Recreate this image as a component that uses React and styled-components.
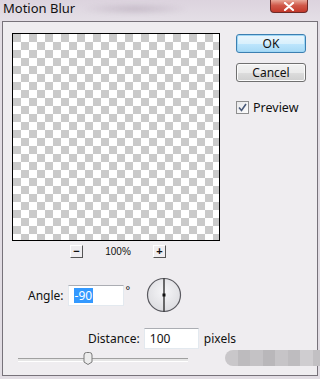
import React from "react";
import styled, { createGlobalStyle } from "styled-components";

const GlobalStyle = createGlobalStyle`
    html, body {
        margin: 0;
        padding: 0;
        background: #e2dde4;
    }
    body {
        font-family: "Noto Sans", "Liberation Sans", sans-serif;
    }
`;

const App = () => {
    return (
        <>
            <GlobalStyle />
            <Window>
                <TitleBar>
                    <Title>Motion Blur</Title>
                    <TitleSmudge />
                    <CloseButton>
                        <svg width="12" height="9" viewBox="0 0 12 9">
                            <path d="M2 1 L10 8 M10 1 L2 8" stroke="#fff" strokeWidth="2.2" strokeLinecap="round" />
                        </svg>
                    </CloseButton>
                </TitleBar>
                <Client>
                    <TopRow>
                        <PreviewCol>
                            <PreviewBox />
                            <ZoomRow>
                                <ZoomButton>−</ZoomButton>
                                <ZoomLabel>100%</ZoomLabel>
                                <ZoomButton>+</ZoomButton>
                            </ZoomRow>
                        </PreviewCol>
                        <ButtonCol>
                            <DialogButton primary>OK</DialogButton>
                            <DialogButton>Cancel</DialogButton>
                            <CheckRow>
                                <CheckBox>
                                    <svg width="9" height="9" viewBox="0 0 9 9">
                                        <path d="M1 4.5 L3.5 7.5 L8 1" stroke="#4a5a7a" strokeWidth="1.6" fill="none" />
                                    </svg>
                                </CheckBox>
                                <span>Preview</span>
                            </CheckRow>
                        </ButtonCol>
                    </TopRow>

                    <AngleRow>
                        <Label>Angle:</Label>
                        <TextBox width={56}>
                            <Selected>-90</Selected>
                        </TextBox>
                        <Degree>°</Degree>
                        <Dial>
                            <svg width="36" height="36" viewBox="0 0 36 36">
                                <defs>
                                    <radialGradient id="dialFill" cx="50%" cy="40%" r="60%">
                                        <stop offset="0%" stopColor="#f6f6f8" />
                                        <stop offset="100%" stopColor="#dcdce0" />
                                    </radialGradient>
                                </defs>
                                <circle cx="18" cy="18" r="16.5" fill="url(#dialFill)" stroke="#5a5a60" strokeWidth="1.2" />
                                <line x1="18" y1="1.5" x2="18" y2="34.5" stroke="#111" strokeWidth="1.2" />
                                <rect x="16.5" y="16.5" width="3" height="3" fill="#111" />
                            </svg>
                        </Dial>
                    </AngleRow>

                    <DistanceRow>
                        <Label>Distance:</Label>
                        <TextBox width={55}>100</TextBox>
                        <Unit>pixels</Unit>
                    </DistanceRow>

                    <SliderRow>
                        <Track>
                            <Thumb>
                                <svg width="10" height="13" viewBox="0 0 10 13">
                                    <path d="M1 3 Q1 0.5 3.5 0.5 L6.5 0.5 Q9 0.5 9 3 L9 10 L5 12.5 L1 10 Z" fill="#ececec" stroke="#7a7a7a" strokeWidth="1" />
                                </svg>
                            </Thumb>
                        </Track>
                    </SliderRow>
                </Client>
                <Watermark>
                    {["#c9c7ca", "#bdbbbe", "#c4c2c5", "#b9b7ba", "#c6c4c7", "#bebcbf", "#cfcdd0", "#c2c0c3"].map((c, i) => (
                        <Block key={i} style={{ background: c }} />
                    ))}
                </Watermark>
            </Window>
        </>
    );
};

export default App;

const Window = styled.div`
    position: relative;
    width: 320px;
    height: 379px;
    background: #e2dde4;
    overflow: hidden;
    display: flex;
    flex-direction: column;
`;

const TitleBar = styled.div`
    position: relative;
    height: 21px;
    display: flex;
    align-items: flex-start;
    background: linear-gradient(180deg, #dcd3de 0%, #e4dfe6 100%);
`;

const Title = styled.div`
    position: relative;
    z-index: 1;
    font-family: "Noto Sans", sans-serif;
    font-size: 13px;
    color: #111;
    margin-left: 3px;
    margin-top: 0;
    line-height: 17px;
`;

const TitleSmudge = styled.div`
    position: absolute;
    left: 80px;
    top: 3px;
    width: 110px;
    height: 12px;
    border-radius: 8px;
    background: radial-gradient(ellipse at center, rgba(120, 100, 125, 0.25) 0%, rgba(180, 165, 185, 0) 70%);
    filter: blur(2px);
`;

const CloseButton = styled.div`
    margin-left: auto;
    margin-right: 12px;
    width: 36px;
    height: 12px;
    border: 1px solid #6e2a28;
    border-top: none;
    border-radius: 0 0 4px 4px;
    background: linear-gradient(180deg, #e9a99a 0%, #d0594a 45%, #c3382a 100%);
    display: flex;
    align-items: center;
    justify-content: center;
`;

const Client = styled.div`
    margin: 0 2px;
    height: 353px;
    border: 1px solid #77727a;
    background: #efedf0;
    display: flex;
    flex-direction: column;
    font-size: 12px;
    color: #111;
`;

const TopRow = styled.div`
    display: flex;
    padding-top: 11px;
`;

const PreviewCol = styled.div`
    margin-left: 9px;
    display: flex;
    flex-direction: column;
`;

const PreviewBox = styled.div`
    width: 206px;
    height: 206px;
    border: 1px solid #000;
    background: repeating-conic-gradient(#ffffff 0 25%, #cacaca 0 50%) 0 0 / 16px 16px;
`;

const ZoomRow = styled.div`
    display: flex;
    align-items: center;
    margin-top: 4px;
    height: 13px;
`;

const ZoomButton = styled.div`
    width: 11px;
    height: 11px;
    border: 1px solid #fff;
    border-right-color: #555;
    border-bottom-color: #555;
    background: #efedf0;
    font-size: 11px;
    line-height: 10px;
    text-align: center;
    font-family: "Liberation Sans", sans-serif;
    font-weight: bold;
    &:first-child {
        margin-left: 58px;
    }
`;

const ZoomLabel = styled.div`
    width: 70px;
    text-align: center;
    font-size: 10px;
    font-family: "Liberation Sans", sans-serif;
`;

const ButtonCol = styled.div`
    margin-left: 16px;
    display: flex;
    flex-direction: column;
    gap: 10px;
    padding-top: 1px;
`;

const DialogButton = styled.div`
    width: 68px;
    height: 17px;
    border: 1px solid ${(p) => (p.primary ? "#3c7fb1" : "#707070")};
    border-radius: 3px;
    box-shadow: inset 0 0 0 1px ${(p) => (p.primary ? "#9fd7f5" : "#fbfbfb")};
    background: ${(p) =>
        p.primary
            ? "linear-gradient(180deg, #eaf6fd 0%, #d9f0fc 50%, #bee6fd 51%, #a7d9f5 100%)"
            : "linear-gradient(180deg, #f2f2f2 0%, #ebebeb 50%, #dddddd 51%, #cfcfcf 100%)"};
    font-size: 12px;
    line-height: 17px;
    text-align: center;
    color: #111;
`;

const CheckRow = styled.div`
    display: flex;
    align-items: center;
    gap: 4px;
    margin-top: 7px;
    font-size: 12.5px;
`;

const CheckBox = styled.div`
    width: 11px;
    height: 11px;
    border: 1px solid #8f8f8f;
    background: linear-gradient(135deg, #e8e8ea 0%, #fdfdfd 100%);
    display: flex;
    align-items: center;
    justify-content: center;
`;

const AngleRow = styled.div`
    display: flex;
    align-items: center;
    margin-top: 19px;
    padding-left: 25px;
    height: 36px;
`;

const Label = styled.div`
    font-size: 12px;
    margin-right: 4px;
`;

const TextBox = styled.div`
    width: ${(p) => p.width}px;
    height: 21px;
    box-sizing: border-box;
    border: 1px solid #e3e9ef;
    border-top-color: #abadb3;
    background: #fff;
    display: flex;
    align-items: center;
    padding-left: 5px;
    font-size: 12px;
    margin-top: 1px;
`;

const Selected = styled.span`
    background: #3399ff;
    color: #fff;
    padding: 0 1px;
    line-height: 15px;
`;

const Degree = styled.div`
    align-self: flex-start;
    margin-top: 5px;
    margin-left: 2px;
    font-size: 11px;
`;

const Dial = styled.div`
    margin-left: 16px;
    width: 36px;
    height: 36px;
`;

const DistanceRow = styled.div`
    display: flex;
    align-items: center;
    margin-top: 14px;
    padding-left: 85px;
`;

const Unit = styled.div`
    margin-left: 5px;
    font-size: 12px;
`;

const SliderRow = styled.div`
    margin-top: 4px;
    padding-left: 15px;
    height: 14px;
    display: flex;
    align-items: center;
`;

const Track = styled.div`
    position: relative;
    width: 170px;
    height: 2px;
    border-top: 1px solid #a0a0a0;
    background: #e6e6e6;
    border-bottom: 1px solid #fff;
`;

const Thumb = styled.div`
    position: absolute;
    left: 65px;
    top: -7px;
    width: 10px;
    height: 13px;
`;

const Watermark = styled.div`
    position: absolute;
    left: 225px;
    top: 350px;
    width: 100px;
    height: 16px;
    display: flex;
    border-radius: 8px 0 0 8px;
    overflow: hidden;
    filter: blur(0.6px);
`;

const Block = styled.div`
    flex: 1;
    height: 100%;
`;
